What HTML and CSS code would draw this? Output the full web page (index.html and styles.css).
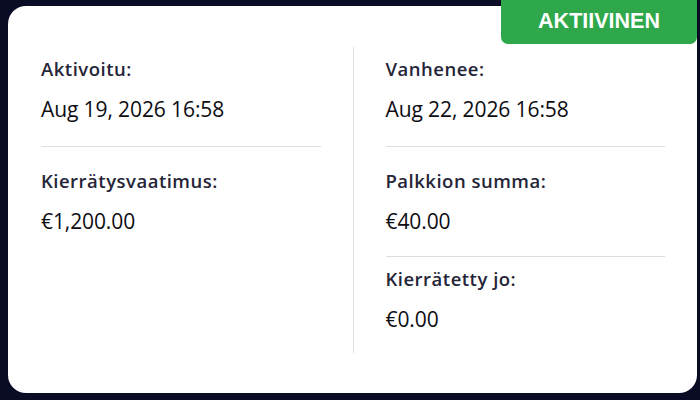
FILE: index.html
```html
<!DOCTYPE html>
<html lang="fi">
<head>
<meta charset="utf-8">
<link rel="stylesheet" href="styles.css">
</head>
<body>
<div class="card">
  <div class="badge">AKTIIVINEN</div>
  <div class="col">
    <div class="item first">
      <div class="label">Aktivoitu:</div>
      <div class="value">Aug 19, 2026 16:58</div>
    </div>
    <div class="item mid last">
      <div class="label">Kierrätysvaatimus:</div>
      <div class="value">€1,200.00</div>
    </div>
  </div>
  <div class="divider"></div>
  <div class="col">
    <div class="item first">
      <div class="label">Vanhenee:</div>
      <div class="value">Aug 22, 2026 16:58</div>
    </div>
    <div class="item mid">
      <div class="label">Palkkion summa:</div>
      <div class="value">€40.00</div>
    </div>
    <div class="item end last">
      <div class="label">Kierrätetty jo:</div>
      <div class="value">€0.00</div>
    </div>
  </div>
</div>
</body>
</html>
```
FILE: styles.css
```css
html, body {
  margin: 0;
  height: 100%;
}
body {
  background: #0a0b24;
  padding: 6px 3px 7px 8px;
  box-sizing: border-box;
  font-family: "Open Sans", "Noto Sans", sans-serif;
}
.card {
  position: relative;
  background: #ffffff;
  border-radius: 18px;
  height: 387px;
  box-sizing: border-box;
  padding: 41px 32px 40px 33px;
  display: flex;
}
.badge {
  position: absolute;
  top: -6px;
  right: 0;
  width: 196px;
  height: 44px;
  background: #2ea84a;
  color: #ffffff;
  border-radius: 0 0 7px 7px;
  font-family: "Liberation Sans", Arial, sans-serif;
  font-weight: 700;
  font-size: 21.5px;
  display: flex;
  align-items: center;
  justify-content: center;
  padding-bottom: 2px;
  box-sizing: border-box;
}
.col {
  flex: 1;
  display: flex;
  flex-direction: column;
}
.divider {
  width: 1px;
  background: #e2e2e6;
  margin: 0 32px 0 32px;
}
.item {
  border-bottom: 1px solid #dedee2;
}
.item.first {
  padding: 11px 0 24px;
}
.item.mid {
  padding: 23px 0 22px;
}
.item.end {
  padding: 11px 0 0;
}
.item.last {
  border-bottom: none;
}
.label {
  font-size: 18.5px;
  line-height: 22px;
  font-weight: 600;
  letter-spacing: 0.5px;
  color: #252538;
}
.value {
  margin-top: 16px;
  font-size: 21px;
  line-height: 26px;
  letter-spacing: -0.1px;
  color: #0d0d12;
}
```
